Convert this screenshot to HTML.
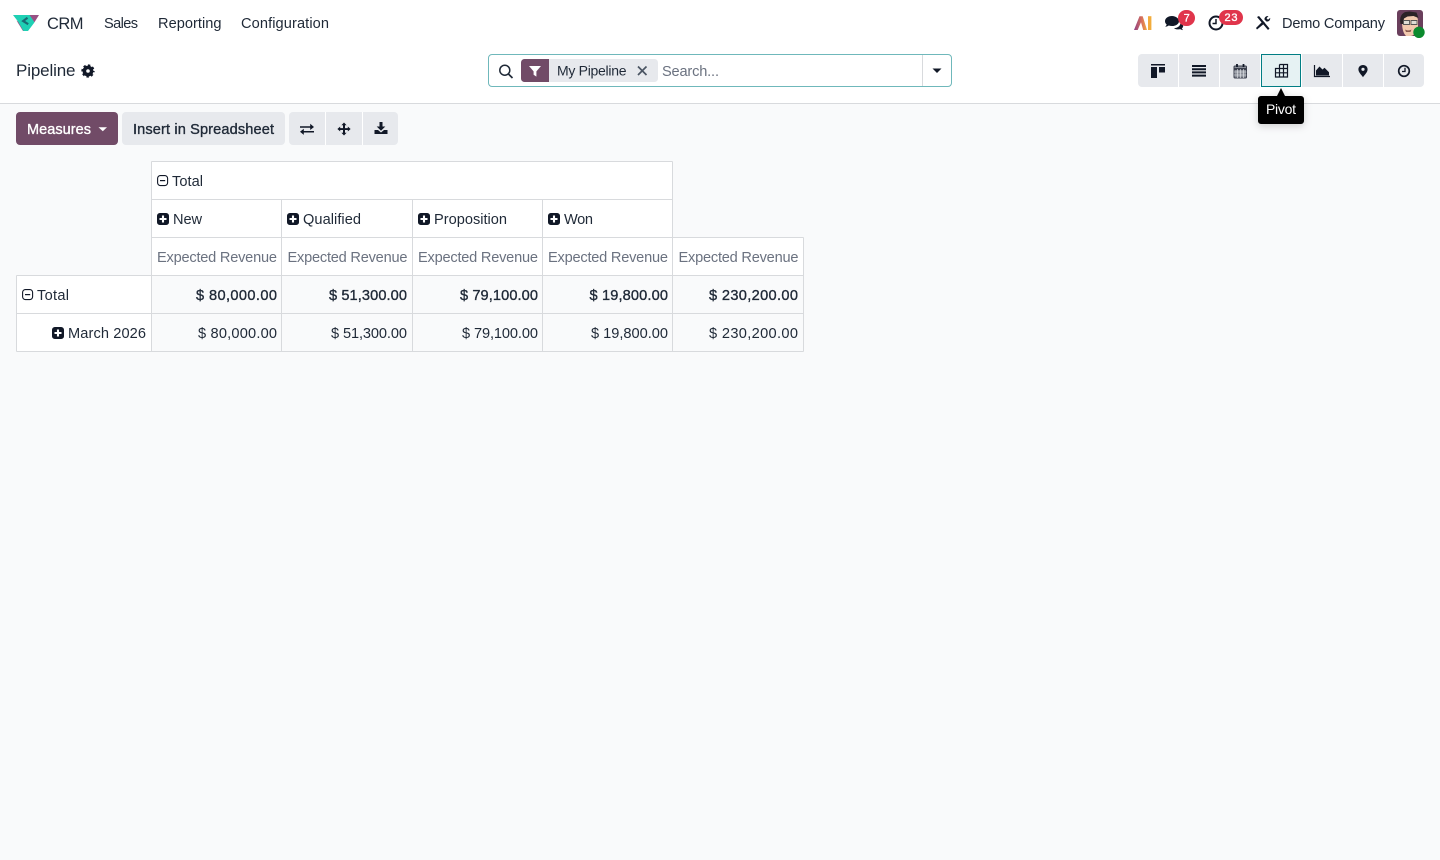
<!DOCTYPE html>
<html lang="en"><head><meta charset="utf-8"><title>Pipeline - CRM</title>
<style>
html,body{margin:0;padding:0;background:#f9fafb;width:1440px;height:860px;overflow:hidden}
svg{display:block;position:absolute;left:0;top:0}
text{font-family:"Liberation Sans",sans-serif;font-size:14.6px;fill:#1f2937}
.m{stroke:currentColor;stroke-width:.35;paint-order:stroke}
.g{fill:#6b7280}
.l{stroke:#d8dadd;stroke-width:1;fill:none}
</style></head><body>
<svg width="1440" height="860" viewBox="0 0 1440 860" xmlns="http://www.w3.org/2000/svg">
<defs>
<g id="plus"><rect x="0" y="0" width="12" height="12" rx="2.800" fill="#111827"/><path d="M6 2.500v7M2.500 6h7" stroke="#fff" stroke-width="2.100"/></g>
<g id="minus"><rect x=".6" y=".6" width="10" height="10" rx="2.800" fill="none" stroke="#111827" stroke-width="1.100"/><path d="M3 5.600h5.200" stroke="#111827" stroke-width="1.200"/></g>
<filter id="sh" x="-30%" y="-30%" width="160%" height="170%"><feDropShadow dx="0" dy="2" stdDeviation="4" flood-color="#000" flood-opacity=".18"/></filter>
<linearGradient id="ai" x1="0" x2="1" y1="0" y2="0"><stop offset="0" stop-color="#8d3f86"/><stop offset=".6" stop-color="#d9705a"/><stop offset="1" stop-color="#f2ac3c"/></linearGradient>
</defs>

<!-- header -->
<rect x="0" y="0" width="1440" height="103" fill="#fff"/>
<rect x="0" y="103" width="1440" height="1" fill="#d8dadd"/>

<!-- logo -->
<path d="M29 15h10l-4.600 7.400z" fill="#985184"/>
<path d="M16.500 20.500l6.500 10.500h3.500l-3-6z" fill="#985184"/>
<path d="M13 15h16.500l5 7.400-6.500 8.600h-4.500l-5.500-9.500z" fill="#1fd0b4"/>
<path d="M27.500 17.800l-4.300 3.200 5 3.200" fill="none" stroke="#1a6a75" stroke-width="2.200"/>

<text x="47" y="29" textLength="36.500" style="font-size:16.500px">CRM</text>
<text x="104" y="28" textLength="34">Sales</text>
<text x="158" y="28" textLength="63.500">Reporting</text>
<text x="241" y="28" textLength="88">Configuration</text>

<!-- systray -->
<path d="M1134 30L1139.500 16.200h3.200L1147 30h-3.800l-2.200-7.800-3.300 7.800z" fill="url(#ai)"/>
<rect x="1148" y="16.200" width="3.400" height="13.800" fill="#f2ac3c"/>

<path d="M1172 16c-3.900 0-7 2.300-7 5.200 0 1.300.6 2.400 1.700 3.300-.3.900-.9 1.600-1.500 2.300 1.300-.1 2.600-.6 3.500-1.300 1 .3 2.100.5 3.300.5 3.900 0 7-2.200 7-4.800S1175.900 16 1172 16z" fill="#111827"/>
<path d="M1180.500 22.500c1.700.8 2.700 2 2.700 3.400 0 1-.5 1.800-1.300 2.500.2.700.7 1.200 1.200 1.700-1.100-.1-2.100-.5-2.900-1-.8.200-1.500.3-2.300.3-1.500 0-2.900-.4-3.900-1.200 3.700-.1 6.800-2.600 6.500-5.700z" fill="#111827"/>
<rect x="1178" y="10" width="17" height="16" rx="8" fill="#e0354b"/>
<text x="1183.600" y="21.500" textLength="5.800" style="font-size:11px;fill:#fff;color:#fff" class="m">7</text>

<circle cx="1216" cy="23" r="6.500" fill="none" stroke="#111827" stroke-width="2"/>
<path d="M1216 19v4.500h-3.500" fill="none" stroke="#111827" stroke-width="1.500"/>
<rect x="1219" y="10" width="24" height="15" rx="7.500" fill="#e0354b"/>
<text x="1224.500" y="21" textLength="13" style="font-size:11px;fill:#fff;color:#fff" class="m">23</text>

<path d="M1257 17l2-1 10.500 12.500-1.500 1.500z" fill="#111827"/>
<path d="M1257 29.500l-1-1.500 7-7 2 2z" fill="#111827"/>
<path d="M1264.500 19.500c-.3-2 1.500-3.800 4-3.500l-2 2.200 1.500 1.500 2.200-1.800c.2 2.400-1.500 4-3.800 3.600z" fill="#111827"/>

<text x="1282" y="28" textLength="103">Demo Company</text>

<!-- avatar -->
<rect x="1397" y="10" width="26" height="26" rx="3" fill="#6a3f5c"/>
<path d="M1402 21c0-5 3.500-7 8-7s8 2 8 7v7c-1 4-4 8-8 8h-4c-3-3-4-8-4-15z" fill="#f2c9ae"/>
<path d="M1400.500 24c-1.500-7 1.500-11 5-12l4-.5 7 1 2 5.500-5-2-6 .5-3.500 2-1 5.500z" fill="#2b2226"/>
<path d="M1403.500 20.500h6v4h-6zM1411 20.500h6v4h-6z" fill="#dedcd4" stroke="#555" stroke-width=".9"/>
<path d="M1405 29.500c2 1.200 4.500 1.200 6.500 0l-1 2.500h-4.500z" fill="#8a5a4e"/>
<circle cx="1419" cy="32.300" r="5.700" fill="#0b8a2e"/>

<!-- control panel -->
<text x="16" y="76" textLength="59.500" style="font-size:17px">Pipeline</text>
<circle cx="88" cy="71" r="3.600" fill="none" stroke="#111827" stroke-width="3.600"/>
<circle cx="88" cy="71" r="5.800" fill="none" stroke="#111827" stroke-width="1.700" stroke-dasharray="2.400 2.312" stroke-dashoffset="1.200"/>

<!-- search -->
<rect x="488.500" y="54.500" width="463" height="32" rx="3.500" fill="#fff" stroke="#6fb8bb"/>
<rect x="922" y="55" width="1" height="31" fill="#d8dadd"/>
<circle cx="504.800" cy="70.200" r="5" fill="none" stroke="#1f2937" stroke-width="1.500"/>
<path d="M508.300 73.800l4.200 4.200" stroke="#1f2937" stroke-width="1.700"/>
<rect x="521" y="59" width="137" height="23" rx="3.500" fill="#e7e9ed"/>
<path d="M524.500 59H549v23h-24.500a3.500 3.500 0 0 1-3.500-3.500v-16a3.500 3.500 0 0 1 3.500-3.500z" fill="#714b67"/>
<path d="M529 66h12l-4.600 5.400v5.200l-2.800-1.800v-3.400z" fill="#fff"/>
<text x="557" y="75.500" textLength="69.500" style="font-size:14px">My Pipeline</text>
<path d="M638 66.500l8.500 8.500M646.500 66.500l-8.500 8.500" stroke="#4b5563" stroke-width="1.700"/>
<text x="662" y="76" textLength="57" class="g">Search...</text>
<path d="M932.500 68.500h9l-4.500 4.500z" fill="#111827"/>

<!-- view switcher -->
<rect x="1138" y="54" width="286" height="33" rx="4" fill="#e7e9ed"/>
<path d="M1178.500 54v33M1219.500 54v33M1260.500 54v33M1301.500 54v33M1342.500 54v33M1383.500 54v33" stroke="#fff"/>
<rect x="1261.500" y="54.500" width="39" height="32" fill="#e6f2f3" stroke="#017e84"/>

<path d="M1151 64h14v1.500h-14zM1151 67h6v11h-6zM1159 67h6v5.500h-6z" fill="#111827"/>
<path d="M1192 65h14v2h-14zM1192 68.200h14v2h-14zM1192 71.400h14v2h-14zM1192 74.600h14v2h-14z" fill="#111827"/>
<rect x="1234" y="66" width="12.500" height="12" rx="1" fill="#8b8f99" stroke="#3b3f4d" stroke-width="1"/>
<path d="M1234 69h12.500" stroke="#3b3f4d" stroke-width="2"/>
<path d="M1237 64v3M1243.500 64v3" stroke="#111827" stroke-width="1.800"/>
<path d="M1234 72h12.500M1234 75h12.500M1237.500 69v9M1240.500 69v9M1243.500 69v9" stroke="#e7e9ed" stroke-width=".6"/>
<path d="M1279.500 64.500h8v12.500h-12v-8.500h12M1275.500 72.800h12M1279.500 64.500v12.500M1283.500 64.500v12.500" fill="none" stroke="#111827" stroke-width="1.200"/>
<path d="M1314.500 65v11.500h15.500" fill="none" stroke="#111827" stroke-width="1.200"/>
<path d="M1316 75.500v-5l3.500-4 3 3 2-1.700 4.500 4.500v3.200z" fill="#111827"/>
<path d="M1363 65c-2.700 0-4.600 1.900-4.600 4.400 0 3 3.300 5.700 4.600 7.800 1.300-2.100 4.600-4.800 4.600-7.800 0-2.500-1.900-4.400-4.600-4.400z" fill="#111827"/>
<circle cx="1363" cy="69.300" r="1.600" fill="#e7e9ed"/>
<circle cx="1404" cy="71" r="5.300" fill="none" stroke="#111827" stroke-width="1.700"/>
<path d="M1405 67.800v3.700h-3" fill="none" stroke="#111827" stroke-width="1.300"/>

<!-- tooltip -->
<g filter="url(#sh)">
<path d="M1261 96h16l4-8 4 8h16a3 3 0 0 1 3 3v22a3 3 0 0 1-3 3h-40a3 3 0 0 1-3-3V99a3 3 0 0 1 3-3z" fill="#000"/>
</g>
<text x="1266" y="114" textLength="30" style="font-size:14px;fill:#fff">Pivot</text>

<!-- buttons -->
<rect x="16" y="112" width="102" height="33" rx="4" fill="#714b67"/>
<text x="27" y="134" textLength="64" style="font-size:14.500px;fill:#fff;color:#fff" class="m">Measures</text>
<path d="M98.500 127.200h8.500l-4.200 4z" fill="#fff"/>
<rect x="122" y="112" width="163" height="33" rx="4" fill="#e7e9ed"/>
<text x="133" y="134" textLength="141" style="color:#1f2937" class="m">Insert in Spreadsheet</text>
<rect x="289" y="112" width="109" height="33" rx="4" fill="#e7e9ed"/>
<path d="M325.500 112v33M362.500 112v33" stroke="#fff"/>
<path d="M300 126.200h10.200v-2.400l3.800 3.200-3.800 3v-2.300H300zM314 131h-10.200v-2.300l-3.800 3.100 3.800 3.100v-2.400H314z" fill="#111827"/>
<path d="M344 122.500l2.600 2.800H345v2.800h2.800v-1.600l2.800 2.500-2.800 2.500V130H345v2.800h1.600l-2.600 2.700-2.600-2.700h1.600V130h-2.800v1.500l-2.800-2.500 2.800-2.500v1.600h2.800v-2.800h-1.600z" fill="#111827"/>
<path d="M379.500 122h3v4.500h2.800l-4.300 4.300-4.300-4.300h2.800z" fill="#111827"/>
<path d="M374.500 130h3.500l3 2.500 3-2.500h3.500v4h-13z" fill="#111827"/>

<!-- pivot table -->
<rect x="151.500" y="161.500" width="521" height="76" fill="#fff"/>
<rect x="151.500" y="237.500" width="652" height="38" fill="#fff"/>
<rect x="16.500" y="275.500" width="135" height="76" fill="#fff"/>
<path class="l" d="M151.500 161.500H672.500M151.500 199.500H672.500M151.500 237.500H803.500M16.500 275.500H803.500M16.500 313.500H803.500M16.500 351.500H803.500"/>
<path class="l" d="M16.500 275.500V351.500M151.500 161.500V351.500M281.500 199.500V351.500M412.500 199.500V351.500M542.500 199.500V351.500M672.500 161.500V351.500M803.500 237.500V351.500"/>

<use href="#minus" x="157" y="175"/>
<text x="172" y="186" textLength="31">Total</text>
<use href="#plus" x="157" y="213"/><text x="173" y="224" textLength="29">New</text>
<use href="#plus" x="287" y="213"/><text x="303" y="224" textLength="58">Qualified</text>
<use href="#plus" x="418" y="213"/><text x="434" y="224" textLength="73">Proposition</text>
<use href="#plus" x="548" y="213"/><text x="564" y="224" textLength="29">Won</text>

<text x="157" y="262" textLength="120" class="g">Expected Revenue</text>
<text x="287.500" y="262" textLength="120" class="g">Expected Revenue</text>
<text x="418" y="262" textLength="120" class="g">Expected Revenue</text>
<text x="548" y="262" textLength="120" class="g">Expected Revenue</text>
<text x="678.500" y="262" textLength="120" class="g">Expected Revenue</text>

<use href="#minus" x="22" y="289"/>
<text x="37" y="300" textLength="32">Total</text>
<g style="color:#1f2937">
<text x="196" y="300" textLength="81" class="m">$ 80,000.00</text>
<text x="329" y="300" textLength="78" class="m">$ 51,300.00</text>
<text x="460" y="300" textLength="78" class="m">$ 79,100.00</text>
<text x="589.500" y="300" textLength="78.500" class="m">$ 19,800.00</text>
<text x="709" y="300" textLength="89" class="m">$ 230,200.00</text>
</g>
<use href="#plus" x="52" y="327"/>
<text x="68" y="338" textLength="78">March 2026</text>
<text x="198" y="338" textLength="79">$ 80,000.00</text>
<text x="331" y="338" textLength="76">$ 51,300.00</text>
<text x="462" y="338" textLength="76">$ 79,100.00</text>
<text x="591" y="338" textLength="77">$ 19,800.00</text>
<text x="709" y="338" textLength="89">$ 230,200.00</text>
</svg>
</body></html>
